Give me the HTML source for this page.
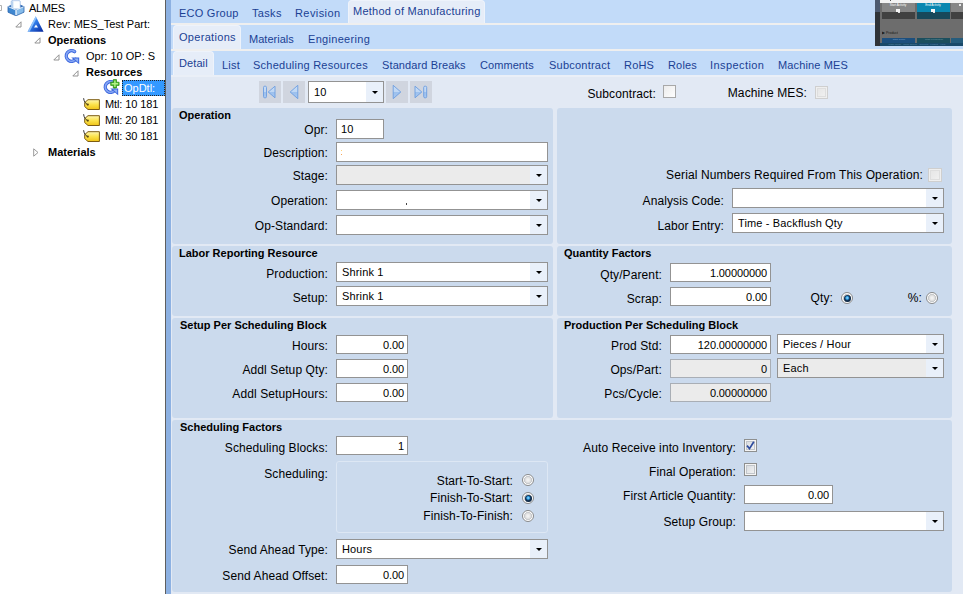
<!DOCTYPE html><html><head><meta charset="utf-8"><title>Engineering Workbench</title><style>
*{box-sizing:border-box;margin:0;padding:0}
html,body{width:963px;height:594px;overflow:hidden;background:#e2e9f4;}
body{position:relative;font-family:"Liberation Sans",sans-serif;font-size:12px;color:#000;}
.abs{position:absolute}
.t{position:absolute;white-space:nowrap;line-height:16px;height:16px}
.tree{font-size:11px}
.b{font-weight:bold}
.lbl{position:absolute;white-space:nowrap;text-align:right;font-size:12px;line-height:16px;height:16px;letter-spacing:.1px}
.tab{position:absolute;white-space:nowrap;color:#1a3f94;font-size:11px;line-height:16px;letter-spacing:.25px}
.grp{position:absolute;background:#cbdaed;border-radius:3px}
.gt{position:absolute;font-weight:bold;font-size:11px;line-height:14px;white-space:nowrap}
.inp{position:absolute;background:#fff;border:1px solid #939393;font-size:11px;line-height:18px;padding:0 4px;letter-spacing:.15px;white-space:nowrap;overflow:hidden}
.inp.r{text-align:right;padding-right:3px;letter-spacing:-.1px}
.inp.dis{background:#ebebeb;border-color:#a9aeb5}
.cmb{position:absolute;background:#fff;border:1px solid #939393;font-size:11px;line-height:18px;padding:0 5px;letter-spacing:.15px;white-space:nowrap;overflow:hidden}
.cmb.dis{background:#ebebeb}
.cmb.tall{line-height:20px}
.cmb.tall i:after{top:9px}
.cmb i{position:absolute;right:0;top:0;bottom:0;width:17px;background:#e9f0fa}
.cmb i:after{content:"";position:absolute;left:5.5px;top:8px;border:3px solid transparent;border-top:3.5px solid #000;border-bottom:0}
.chk{position:absolute;width:13px;height:13px;border:1px solid #8e8f8f;background:linear-gradient(135deg,#d3d7dc 0,#f7f7f7 100%);box-shadow:inset 0 0 0 1px #f4f4f4, inset 0 0 0 2px #c2c6cb}
.chk.w{background:linear-gradient(135deg,#ececec 0,#fefefe 100%);box-shadow:none;border-color:#a8a8a8}
.chk.dis{background:linear-gradient(135deg,#e4e4e4 0,#f2f2f2 100%);border-color:#cfcfcf;box-shadow:inset 0 0 0 1px #efefef, inset 0 0 0 2px #dedede}
.rad{position:absolute;width:12px;height:12px;border-radius:50%;border:1px solid #8a8b8c;background:radial-gradient(circle closest-side at 50% 50%,#f6f6f6 0,#e8e8e8 40%,#d4d4d4 66%,#bec1c5 74%,#fdfdfd 84%,#fdfdfd 100%)}
.rad.on:after{content:"";position:absolute;left:1.5px;top:1.5px;width:7px;height:7px;border-radius:50%;background:radial-gradient(circle closest-side at 46% 42%,#a8e6ff 0,#2b9ae0 50%,#17406a 76%,#0f2a48 100%)}
.nav{position:absolute;width:22px;height:22px;background:#d0d5df}
</style></head><body>
<div class="abs" style="left:0;top:0;width:165px;height:594px;background:#fff"></div>
<div class="abs" style="left:165px;top:0;width:1px;height:594px;background:#5f5f5f"></div>
<div class="abs" style="left:166px;top:0;width:5px;height:594px;background:#8db1e2"></div>
<svg class="abs" style="left:0;top:5px" width="3" height="7"><path d="M0 .5H1.5V5.5H0" fill="none" stroke="#b0b0b0"/></svg>
<svg class="abs" style="left:7px;top:0px" width="18" height="16" viewBox="0 0 18 16"><path d="M1 6.2L5 4.6H13L17 6.2V7L9 10.5L1 7Z" fill="#2d68b3"/><path d="M4.2 1.2L6.2 0H11.2L13.2 1.2V8.6H4.2Z" fill="#dfe9f7" stroke="#8fb3e3" stroke-width=".7"/><path d="M6.4 1.4H12.6V8.6H6.4Z" fill="#fdfeff"/><path d="M4.6 1.4H6.2V8.6H4.6Z" fill="#b9d3f0"/><path d="M1 6.6L8.6 9.9V15.6L1 12.2Z" fill="#3f87d0"/><path d="M17 6.6L9.4 9.9V15.6L17 12.2Z" fill="#86bbe9"/><path d="M1 6.6L9 10L17 6.6" fill="none" stroke="#eaf3fc" stroke-width=".9"/><path d="M9 10V15.6" stroke="#e4eefa" stroke-width=".9"/><path d="M1 6.4V12.2L9 15.8L17 12.2V6.4" fill="none" stroke="#2b65ad" stroke-width=".8"/></svg>
<div class="t tree" style="left:29px;top:0px"><span style="letter-spacing:-.3px">ALMES</span></div>
<svg class="abs" style="left:15px;top:21px" width="7" height="7" viewBox="0 0 7 7"><path d="M6 .8V6H.8Z" fill="#fff" stroke="#939393" stroke-width="1"/></svg>
<svg class="abs" style="left:27px;top:16px" width="17" height="16" viewBox="0 0 17 16"><defs><linearGradient id="rv" x1="0" y1="0" x2="1" y2="1"><stop offset="0" stop-color="#7fc0ff"/><stop offset=".45" stop-color="#2f7ae8"/><stop offset="1" stop-color="#06249a"/></linearGradient></defs><path d="M8.7 .3L16.6 15.7H.6Z" fill="url(#rv)"/><path d="M.6 15.7L8.7 .3L9.6 2L2.6 15.7Z" fill="#a8d4ff" opacity=".75"/><path d="M9 8.6L11 11.6H7Z" fill="#fff"/></svg>
<div class="t tree" style="left:48px;top:16px">Rev: MES_Test Part:</div>
<svg class="abs" style="left:34px;top:37px" width="7" height="7" viewBox="0 0 7 7"><path d="M6 .8V6H.8Z" fill="#fff" stroke="#939393" stroke-width="1"/></svg>
<div class="t tree b" style="left:48px;top:32px">Operations</div>
<svg class="abs" style="left:53px;top:54px" width="7" height="7" viewBox="0 0 7 7"><path d="M6 .8V6H.8Z" fill="#fff" stroke="#939393" stroke-width="1"/></svg>
<svg class="abs" style="left:63px;top:48px" width="18" height="17" viewBox="0 0 18 17"><path d="M11.6 3.6A5.3 5.3 0 1 0 12.6 11.4" fill="none" stroke="#3460dc" stroke-width="3.4" stroke-linecap="round"/><path d="M11.6 3.6A5.3 5.3 0 1 0 12.6 11.4" fill="none" stroke="#86a6f4" stroke-width="1.8" stroke-linecap="round"/><path d="M8.2 9.4H16.2V16.2Z" fill="#3d68de"/><path d="M10.8 10.4H15.2V14.2Z" fill="#8fb0f3"/></svg>
<div class="t tree" style="left:86px;top:48px">Opr: 10 OP: S</div>
<svg class="abs" style="left:72px;top:70px" width="7" height="7" viewBox="0 0 7 7"><path d="M6 .8V6H.8Z" fill="#fff" stroke="#939393" stroke-width="1"/></svg>
<div class="t tree b" style="left:86px;top:64px">Resources</div>
<svg class="abs" style="left:102px;top:79px" width="18" height="17" viewBox="0 0 18 17"><path d="M11.6 3.6A5.3 5.3 0 1 0 12.6 11.4" fill="none" stroke="#3460dc" stroke-width="3.4" stroke-linecap="round"/><path d="M11.6 3.6A5.3 5.3 0 1 0 12.6 11.4" fill="none" stroke="#86a6f4" stroke-width="1.8" stroke-linecap="round"/><path d="M8.2 9.4H16.2V16.2Z" fill="#3d68de"/><path d="M10.8 10.4H15.2V14.2Z" fill="#8fb0f3"/><path d="M11.3 .6h3.2v2.6h2.6v3.2h-2.6V9h-3.2V6.4H8.7V3.2h2.6z" fill="#3fb51f" stroke="#2b8a12" stroke-width=".7"/><path d="M12.2 1.5h1.4v2.6h2.6v1.4h-2.6v2.6h-1.4V5.5H9.6V4.1h2.6z" fill="#b6f08a"/></svg>
<div class="t tree" style="left:122px;top:80px;background:#3399ff;color:#fff;padding:0 2px;outline:1px dotted #222;outline-offset:-1px;width:43px;overflow:hidden">OpDtl:</div>
<svg class="abs" style="left:83px;top:98px" width="18" height="14" viewBox="0 0 18 14"><defs><linearGradient id="tg" x1="0" y1="0" x2="0" y2="1"><stop offset="0" stop-color="#fff7b0"/><stop offset=".5" stop-color="#fbe24a"/><stop offset="1" stop-color="#f0c418"/></linearGradient></defs><path d="M5 1.7H16.4V11.5H5L1.7 8.6V4.6Z" fill="url(#tg)" stroke="#7d5c12" stroke-width="1"/><path d="M.6 .2C1 3 2 5.4 4.6 6.6" stroke="#222" stroke-width=".9" fill="none"/><circle cx="4.8" cy="6.6" r="1.1" fill="#5a4510"/></svg>
<div class="t tree" style="left:105px;top:96px"><span style="letter-spacing:-.1px">Mtl: 10 181</span></div>
<svg class="abs" style="left:83px;top:114px" width="18" height="14" viewBox="0 0 18 14"><defs><linearGradient id="tg" x1="0" y1="0" x2="0" y2="1"><stop offset="0" stop-color="#fff7b0"/><stop offset=".5" stop-color="#fbe24a"/><stop offset="1" stop-color="#f0c418"/></linearGradient></defs><path d="M5 1.7H16.4V11.5H5L1.7 8.6V4.6Z" fill="url(#tg)" stroke="#7d5c12" stroke-width="1"/><path d="M.6 .2C1 3 2 5.4 4.6 6.6" stroke="#222" stroke-width=".9" fill="none"/><circle cx="4.8" cy="6.6" r="1.1" fill="#5a4510"/></svg>
<div class="t tree" style="left:105px;top:112px"><span style="letter-spacing:-.1px">Mtl: 20 181</span></div>
<svg class="abs" style="left:83px;top:130px" width="18" height="14" viewBox="0 0 18 14"><defs><linearGradient id="tg" x1="0" y1="0" x2="0" y2="1"><stop offset="0" stop-color="#fff7b0"/><stop offset=".5" stop-color="#fbe24a"/><stop offset="1" stop-color="#f0c418"/></linearGradient></defs><path d="M5 1.7H16.4V11.5H5L1.7 8.6V4.6Z" fill="url(#tg)" stroke="#7d5c12" stroke-width="1"/><path d="M.6 .2C1 3 2 5.4 4.6 6.6" stroke="#222" stroke-width=".9" fill="none"/><circle cx="4.8" cy="6.6" r="1.1" fill="#5a4510"/></svg>
<div class="t tree" style="left:105px;top:128px"><span style="letter-spacing:-.1px">Mtl: 30 181</span></div>
<svg class="abs" style="left:33px;top:148px" width="6" height="9" viewBox="0 0 6 9"><path d="M.7 .8L5 4.5L.7 8.2Z" fill="#fff" stroke="#9a9a9a" stroke-width="1"/></svg>
<div class="t tree b" style="left:48px;top:144px">Materials</div>
<div class="abs" style="left:171px;top:0;width:792px;height:75px;background:#c2dbf9"></div>
<div class="abs" style="left:171px;top:23px;width:792px;height:2px;background:#efefef"></div>
<div class="abs" style="left:171px;top:49px;width:792px;height:2px;background:#efefef"></div>
<div class="abs" style="left:171px;top:75px;width:792px;height:2px;background:#eaeff7"></div>
<div class="abs" style="left:348px;top:0px;width:137px;height:23px;background:#e6edf8;border:1px solid #eef3fb;border-bottom:0;border-radius:4px 4px 0 0"></div>
<div class="abs" style="left:173px;top:25px;width:68px;height:24px;background:#e6edf8;border:1px solid #eef3fb;border-bottom:0;border-radius:4px 4px 0 0"></div>
<div class="abs" style="left:173px;top:51px;width:41px;height:24px;background:#e6edf8;border:1px solid #eef3fb;border-bottom:0;border-radius:4px 4px 0 0"></div>
<div class="tab" style="left:179px;top:5px;letter-spacing:0.241px">ECO Group</div>
<div class="tab" style="left:252px;top:5px;letter-spacing:0.32px">Tasks</div>
<div class="tab" style="left:295px;top:5px;letter-spacing:0.416px">Revision</div>
<div class="tab" style="left:353px;top:3px;letter-spacing:0.255px">Method of Manufacturing</div>
<div class="tab" style="left:179px;top:29px;letter-spacing:0.31px">Operations</div>
<div class="tab" style="left:249px;top:31px;letter-spacing:0.022px">Materials</div>
<div class="tab" style="left:308px;top:31px;letter-spacing:0.308px">Engineering</div>
<div class="tab" style="left:179px;top:55px;letter-spacing:0.096px">Detail</div>
<div class="tab" style="left:222px;top:57px;letter-spacing:0.193px">List</div>
<div class="tab" style="left:253px;top:57px;letter-spacing:0.243px">Scheduling Resources</div>
<div class="tab" style="left:382px;top:57px;letter-spacing:0.119px">Standard Breaks</div>
<div class="tab" style="left:480px;top:57px;letter-spacing:0.073px">Comments</div>
<div class="tab" style="left:549px;top:57px;letter-spacing:0.23px">Subcontract</div>
<div class="tab" style="left:624px;top:57px;letter-spacing:0.187px">RoHS</div>
<div class="tab" style="left:668px;top:57px;letter-spacing:0.17px">Roles</div>
<div class="tab" style="left:710px;top:57px;letter-spacing:0.427px">Inspection</div>
<div class="tab" style="left:778px;top:57px;letter-spacing:0.132px">Machine MES</div>
<div class="abs" style="left:875px;top:0px;width:88px;height:46px;background:#6d6d6d"></div>
<div class="abs" style="left:875px;top:0px;width:5px;height:12px;background:#4d5a70"></div>
<div class="abs" style="left:875px;top:12px;width:5px;height:34px;background:#2f3338"></div>
<div class="abs" style="left:880px;top:0px;width:83px;height:3px;background:#f2f2f2"></div>
<div class="abs" style="left:890px;top:0px;width:1px;height:1px;background:#555"></div>
<div class="abs" style="left:882px;top:3px;width:33px;height:9px;background:#868686"></div>
<div class="abs" style="left:882px;top:12px;width:33px;height:7px;background:#414141"></div>
<div class="abs" style="left:917px;top:3px;width:33px;height:9px;background:#0a87b0"></div>
<div class="abs" style="left:917px;top:12px;width:33px;height:7px;background:#17485a"></div>
<div class="abs" style="left:951px;top:3px;width:12px;height:9px;background:#868686"></div>
<div class="abs" style="left:951px;top:12px;width:12px;height:7px;background:#414141"></div>
<div class="abs" style="left:882px;top:38px;width:33px;height:5px;background:#1c4f7e"></div>
<div class="abs" style="left:917px;top:38px;width:33px;height:5px;background:#1c4f5e"></div>
<div class="abs" style="left:951px;top:38px;width:12px;height:5px;background:#265c7c"></div>
<div class="abs" style="left:880px;top:43px;width:83px;height:3px;background:#1a4a6a"></div>
<div class="abs" style="left:888px;top:3px;width:20px;height:4px;font-size:3px;line-height:4px;color:#fff;text-align:center;overflow:hidden;white-space:nowrap">Start Activity</div>
<div class="abs" style="left:923px;top:3px;width:20px;height:4px;font-size:3px;line-height:4px;color:#fff;text-align:center;overflow:hidden;white-space:nowrap">End Activity</div>
<div class="abs" style="left:896px;top:9px;width:4px;height:3px;background:#f4f4f4"></div>
<div class="abs" style="left:898px;top:12px;width:2px;height:1px;background:#ddd"></div>
<div class="abs" style="left:931px;top:9px;width:4px;height:3px;background:#f4f4f4"></div>
<div class="abs" style="left:933px;top:12px;width:2px;height:1px;background:#ddd"></div>
<div class="abs" style="left:959px;top:4px;width:2px;height:2px;background:#e8e8e8"></div>
<div class="abs" style="left:882px;top:31px;width:16px;height:4.5px;font-size:3.5px;line-height:4.5px;color:#1a1a1a;text-align:center;overflow:hidden;white-space:nowrap">&#9654; Production</div>
<div class="abs" style="left:888px;top:38px;width:22px;height:3.5px;font-size:2.5px;line-height:3.5px;color:#7fa6c8;text-align:center;overflow:hidden;white-space:nowrap">Start Setup</div>
<div class="abs" style="left:923px;top:38px;width:22px;height:3.5px;font-size:2.5px;line-height:3.5px;color:#6f99a6;text-align:center;overflow:hidden;white-space:nowrap">Start Production</div>
<div class="abs" style="left:882px;top:43px;width:70px;height:3.5px;font-size:2.5px;line-height:3.5px;color:#5f8fb0;text-align:center;overflow:hidden;white-space:nowrap">Main Menu &#183; Work Queue &#183; Reports &#183; Logout &#183; Help</div>
<svg width="0" height="0" style="position:absolute"><defs><linearGradient id="ng" x1="0" y1="0" x2="0" y2="1"><stop offset="0" stop-color="#c6dcf6"/><stop offset=".52" stop-color="#bfd7f4"/><stop offset=".52" stop-color="#9cc0ed"/><stop offset="1" stop-color="#a8c8f0"/></linearGradient></defs></svg>
<div class="nav" style="left:259px;top:81px"></div>
<svg class="abs" style="left:259px;top:81px" width="22" height="22" viewBox="0 0 22 22"><rect x="4.5" y="5.2" width="3" height="11.6" rx="1.2" fill="url(#ng)" stroke="#6c9de0" stroke-width=".9" stroke-linejoin="round"/><path d="M16 5.2V16.8L9.2 11Z" fill="url(#ng)" stroke="#6c9de0" stroke-width=".9" stroke-linejoin="round"/></svg>
<div class="nav" style="left:283px;top:81px"></div>
<svg class="abs" style="left:283px;top:81px" width="22" height="22" viewBox="0 0 22 22"><path d="M14.8 4.3V17.7L7.2 11Z" fill="url(#ng)" stroke="#6c9de0" stroke-width=".9" stroke-linejoin="round"/></svg>
<div class="nav" style="left:386px;top:81px"></div>
<svg class="abs" style="left:386px;top:81px" width="22" height="22" viewBox="0 0 22 22"><path d="M7.2 4.3V17.7L14.8 11Z" fill="url(#ng)" stroke="#6c9de0" stroke-width=".9" stroke-linejoin="round"/></svg>
<div class="nav" style="left:410px;top:81px"></div>
<svg class="abs" style="left:410px;top:81px" width="22" height="22" viewBox="0 0 22 22"><path d="M5 5.2V16.8L11.8 11Z" fill="url(#ng)" stroke="#6c9de0" stroke-width=".9" stroke-linejoin="round"/><rect x="13.7" y="5.2" width="3" height="11.6" rx="1.2" fill="url(#ng)" stroke="#6c9de0" stroke-width=".9" stroke-linejoin="round"/></svg>
<div class="cmb tall" style="left:308px;top:81px;width:76px;height:22px">10<i></i></div>
<div class="lbl" style="right:307px;top:86px">Subcontract:</div>
<div class="chk w" style="left:663px;top:85px"></div>
<div class="lbl" style="right:156px;top:85px">Machine MES:</div>
<div class="chk dis" style="left:815px;top:86px"></div>
<div class="grp" style="left:172px;top:108px;width:381px;height:136px"></div>
<div class="gt" style="left:179px;top:108px">Operation</div>
<div class="grp" style="left:557px;top:108px;width:395px;height:136px"></div>
<div class="grp" style="left:172px;top:246px;width:381px;height:70px"></div>
<div class="gt" style="left:179px;top:246px">Labor Reporting Resource</div>
<div class="grp" style="left:557px;top:246px;width:395px;height:70px"></div>
<div class="gt" style="left:564px;top:246px">Quantity Factors</div>
<div class="grp" style="left:172px;top:318px;width:381px;height:100px"></div>
<div class="gt" style="left:180px;top:318px">Setup Per Scheduling Block</div>
<div class="grp" style="left:557px;top:318px;width:395px;height:100px"></div>
<div class="gt" style="left:564px;top:318px">Production Per Scheduling Block</div>
<div class="grp" style="left:172px;top:420px;width:780px;height:172px"></div>
<div class="gt" style="left:180px;top:420px">Scheduling Factors</div>
<div class="lbl" style="right:635px;top:122px">Opr:</div>
<div class="inp" style="left:336px;top:119px;width:48px;height:20px;line-height:18px">10</div>
<div class="lbl" style="right:635px;top:145px">Description:</div>
<div class="inp" style="left:336px;top:142px;width:212px;height:20px;line-height:18px"></div>
<div class="abs" style="left:341px;top:150px;width:1px;height:1px;background:#ffd27a"></div><div class="abs" style="left:341px;top:154px;width:1px;height:1px;background:#f5a45a"></div>
<div class="lbl" style="right:635px;top:168px">Stage:</div>
<div class="cmb dis" style="left:336px;top:165px;width:212px;height:20px"><i></i></div>
<div class="lbl" style="right:635px;top:193px">Operation:</div>
<div class="cmb" style="left:336px;top:190px;width:212px;height:20px"><i></i></div>
<div class="abs" style="left:406px;top:203px;width:1px;height:2px;background:#444"></div>
<div class="lbl" style="right:635px;top:218px">Op-Standard:</div>
<div class="cmb" style="left:336px;top:215px;width:212px;height:20px"><i></i></div>
<div class="lbl" style="right:40px;top:167px"><span style="letter-spacing:.13px">Serial Numbers Required From This Operation:</span></div>
<div class="chk dis" style="width:14px;height:14px;left:928px;top:168px"></div>
<div class="lbl" style="right:239px;top:193px">Analysis Code:</div>
<div class="cmb" style="left:732px;top:188px;width:212px;height:20px"><i></i></div>
<div class="lbl" style="right:239px;top:218px">Labor Entry:</div>
<div class="cmb" style="left:732px;top:213px;width:212px;height:20px">Time - Backflush Qty<i></i></div>
<div class="lbl" style="right:635px;top:266px">Production:</div>
<div class="cmb" style="left:336px;top:262px;width:212px;height:20px">Shrink 1<i></i></div>
<div class="lbl" style="right:635px;top:290px">Setup:</div>
<div class="cmb" style="left:336px;top:286px;width:212px;height:20px">Shrink 1<i></i></div>
<div class="lbl" style="right:301px;top:267px">Qty/Parent:</div>
<div class="inp r" style="left:670px;top:263px;width:101px;height:19px;line-height:19px">1.00000000</div>
<div class="lbl" style="right:301px;top:291px">Scrap:</div>
<div class="inp r" style="left:670px;top:287px;width:101px;height:19px;line-height:19px">0.00</div>
<div class="lbl" style="right:130px;top:290px">Qty:</div>
<div class="rad on" style="left:841px;top:292px"></div>
<div class="lbl" style="right:41px;top:290px">%:</div>
<div class="rad" style="left:926px;top:292px"></div>
<div class="lbl" style="right:635px;top:338px">Hours:</div>
<div class="inp r" style="left:336px;top:335px;width:72px;height:19px;line-height:19px">0.00</div>
<div class="lbl" style="right:635px;top:362px">Addl Setup Qty:</div>
<div class="inp r" style="left:336px;top:359px;width:72px;height:19px;line-height:19px">0.00</div>
<div class="lbl" style="right:635px;top:386px">Addl SetupHours:</div>
<div class="inp r" style="left:336px;top:383px;width:72px;height:19px;line-height:19px">0.00</div>
<div class="lbl" style="right:301px;top:338px">Prod Std:</div>
<div class="inp r" style="left:670px;top:335px;width:101px;height:19px;line-height:19px">120.00000000</div>
<div class="cmb" style="left:777px;top:334px;width:167px;height:20px">Pieces / Hour<i></i></div>
<div class="lbl" style="right:301px;top:362px">Ops/Part:</div>
<div class="inp r dis" style="left:670px;top:359px;width:101px;height:19px;line-height:19px">0</div>
<div class="cmb dis" style="left:777px;top:358px;width:167px;height:20px">Each<i></i></div>
<div class="lbl" style="right:301px;top:386px">Pcs/Cycle:</div>
<div class="inp r dis" style="left:670px;top:383px;width:101px;height:19px;line-height:19px">0.00000000</div>
<div class="lbl" style="right:635px;top:440px">Scheduling Blocks:</div>
<div class="inp r" style="left:336px;top:436px;width:72px;height:19px;line-height:19px">1</div>
<div class="lbl" style="right:635px;top:466px">Scheduling:</div>
<div class="abs" style="left:336px;top:461px;width:212px;height:72px;border:1px solid #dde7f4;border-radius:3px"></div>
<div class="lbl" style="right:450px;top:473px">Start-To-Start:</div>
<div class="rad" style="left:522px;top:474px"></div>
<div class="lbl" style="right:450px;top:490px">Finish-To-Start:</div>
<div class="rad on" style="left:522px;top:492px"></div>
<div class="lbl" style="right:450px;top:508px">Finish-To-Finish:</div>
<div class="rad" style="left:522px;top:510px"></div>
<div class="lbl" style="right:635px;top:542px">Send Ahead Type:</div>
<div class="cmb" style="left:336px;top:539px;width:212px;height:20px">Hours<i></i></div>
<div class="lbl" style="right:635px;top:568px">Send Ahead Offset:</div>
<div class="inp r" style="left:336px;top:565px;width:72px;height:19px;line-height:19px">0.00</div>
<div class="lbl" style="right:227px;top:440px">Auto Receive into Inventory:</div>
<div class="chk " style="left:744px;top:439px"></div>
<svg class="abs" style="left:744px;top:439px" width="13" height="13" viewBox="0 0 13 13"><path d="M3 6.6L5.5 9.6L9.8 2.7" fill="none" stroke="#2f4c9e" stroke-width="1.7"/></svg>
<div class="lbl" style="right:227px;top:464px">Final Operation:</div>
<div class="chk " style="left:744px;top:463px"></div>
<div class="lbl" style="right:227px;top:488px">First Article Quantity:</div>
<div class="inp r" style="left:744px;top:485px;width:89px;height:19px;line-height:19px">0.00</div>
<div class="lbl" style="right:227px;top:514px">Setup Group:</div>
<div class="cmb" style="left:744px;top:511px;width:200px;height:20px"><i></i></div>
</body></html>
